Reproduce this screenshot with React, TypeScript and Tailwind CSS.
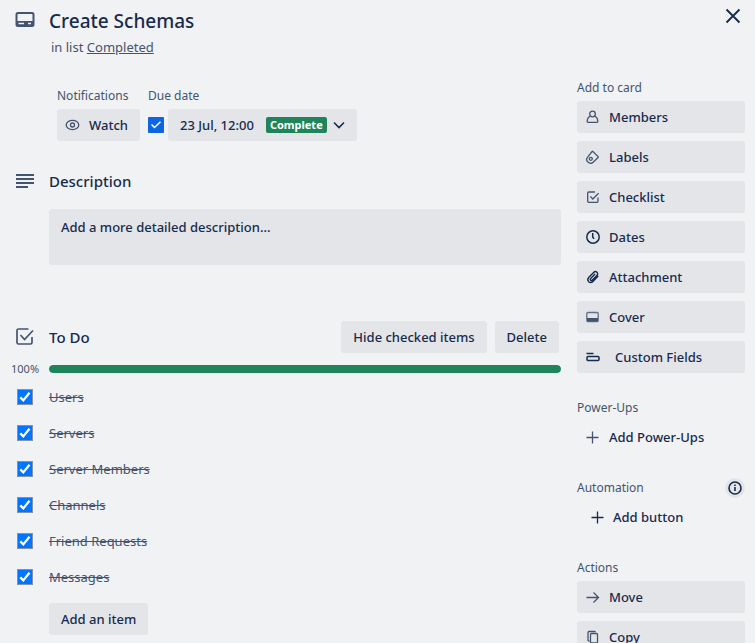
import { useState } from "react";
import type { ReactNode } from "react";

const buttonBase =
  "flex h-8 items-center rounded-[3px] text-[13px] leading-5 font-medium text-[#172b4d]";
const filled = "bg-[#e4e5e9] hover:bg-[#d8dae0]";

function Glyph({ children, size = "small" }: { children: ReactNode; size?: "small" | "large" }) {
  return (
    <svg
      viewBox={size === "small" ? "0 0 16 16" : "0 0 24 24"}
      className={size === "small" ? "size-4 shrink-0" : "size-6 shrink-0"}
      fill="none"
      stroke="#44546f"
      strokeWidth={size === "small" ? 1.3 : 2}
      aria-hidden="true"
    >
      {children}
    </svg>
  );
}

const icons = {
  members: (
    <Glyph>
      <circle cx="7.500" cy="5" r="2.800" />
      <path d="M5.400 7.200C3.300 8 2.200 9.700 2.200 12.600c0 .5.300.8.800.8h9c.5 0 .8-.3.8-.8 0-2.900-1.100-4.600-3.200-5.400" />
    </Glyph>
  ),
  labels: (
    <Glyph>
      <path d="M7.900 2.500 13.100 7.600c.3.300.3.600 0 .9L8.400 13c-1.900 1.700-4 1.500-5.500.1-1.600-1.600-1.600-3.800.1-5.500L7.100 2.500c.3-.3.5-.3.800 0Z" />
      <circle cx="5.800" cy="9.800" r="1.500" />
    </Glyph>
  ),
  checklist: (
    <Glyph>
      <path d="M10 3H3.700c-.6 0-1 .4-1 1v8.300c0 .6.400 1 1 1H12c.6 0 1-.4 1-1V8.500M5.300 7.400 7.800 10l5.800-5.800" />
    </Glyph>
  ),
  dates: (
    <Glyph>
      <g stroke="#172b4d" strokeWidth="1.500">
        <circle cx="8" cy="8" r="6.200" />
        <path d="M7.700 4v4.200l1.500 1.500" />
      </g>
    </Glyph>
  ),
  attachment: (
    <Glyph>
      <path
        stroke="#172b4d"
        strokeWidth="1.400"
        strokeLinecap="round"
        d="m12.900 7.300-4.700 4.900c-1.400 1.500-3.300 1.600-4.500.5-1.200-1.200-1.100-3 .2-4.400l4.700-4.800c1-1 2.500-1.100 3.400-.3.900.9.900 2.300-.1 3.300L7.400 11c-.6.6-1.300.7-1.800.2s-.5-1.200.1-1.800l4.100-4.200"
      />
    </Glyph>
  ),
  cover: (
    <Glyph>
      <rect x="1.800" y="3.500" width="11.400" height="9" rx="1" stroke="#626f86" />
      <path d="M2 9h11v3.500H2z" fill="#44546f" stroke="none" />
    </Glyph>
  ),
  fields: (
    <Glyph>
      <path stroke="#172b4d" strokeWidth="1.500" d="M1.500 4.500h7" />
      <rect stroke="#172b4d" strokeWidth="1.500" x="2" y="7.500" width="12" height="4" rx="1" />
    </Glyph>
  ),
  plus: (
    <Glyph>
      <path d="M7.500 2.500v12M1.500 8.500h12" />
    </Glyph>
  ),
  plusDark: (
    <Glyph>
      <path stroke="#172b4d" d="M8.500 2.500v12M2.500 8.500h12" />
    </Glyph>
  ),
  move: (
    <Glyph>
      <path d="M1.500 8.500h11.500M8.500 3.500l5 5-5 5" />
    </Glyph>
  ),
  copy: (
    <Glyph>
      <path d="M4.500 12H4c-.6 0-1-.4-1-1V3.500c0-.6.400-1 1-1h5.500c.5 0 .8.300.8.800" />
      <rect x="5.500" y="4.500" width="7" height="9.500" rx="1" />
    </Glyph>
  ),
};

function SideButton({
  icon,
  label,
  plain = false,
  wide = false,
}: {
  icon: ReactNode;
  label: string;
  plain?: boolean;
  wide?: boolean;
}) {
  return (
    <button
      type="button"
      className={`${buttonBase} w-full px-2 ${wide ? "gap-[14px]" : "gap-2"} ${plain ? "" : filled}`}
    >
      {icon}
      {label}
    </button>
  );
}

function SideSection({
  title,
  action,
  children,
}: {
  title: string;
  action?: ReactNode;
  children: ReactNode;
}) {
  return (
    <section>
      <div className="mb-[3px] flex h-5 items-center justify-between">
        <h3 className="text-xs leading-5 text-[#44546f]">{title}</h3>
        {action}
      </div>
      <div className="flex flex-col gap-2">{children}</div>
    </section>
  );
}

function TickBox({
  id,
  label,
  checked,
  onChange,
  outlined = false,
}: {
  id: string;
  label?: string;
  checked: boolean;
  onChange: () => void;
  outlined?: boolean;
}) {
  return (
    <span className="grid size-4 shrink-0">
      <input
        id={id}
        type="checkbox"
        aria-label={label}
        checked={checked}
        onChange={onChange}
        className={`col-start-1 row-start-1 size-4 appearance-none ${
          outlined
            ? "border border-[#8590a2] bg-white checked:bg-[#0075ff]"
            : "rounded-[1px] bg-[#dcdfe4] checked:bg-[#0c66e4]"
        }`}
      />
      {checked && (
        <svg
          viewBox="0 0 16 16"
          className="pointer-events-none col-start-1 row-start-1 size-4"
          fill="none"
          stroke="#fff"
          aria-hidden="true"
        >
          {outlined ? (
            <path strokeWidth="2.300" d="m3.300 8.400 3 3L12.500 3.700" />
          ) : (
            <path strokeWidth="1.500" d="m3.500 7.500 3 3 6-5.700" />
          )}
        </svg>
      )}
    </span>
  );
}

const tasks = ["Users", "Servers", "Server Members", "Channels", "Friend Requests", "Messages"];

export default function App() {
  const [done, setDone] = useState(tasks.map(() => true));
  const [dueDone, setDueDone] = useState(true);
  const percent = Math.round((done.filter(Boolean).length / tasks.length) * 100);

  return (
    <div className="min-h-screen bg-[#f1f2f4] pb-4 font-['Noto_Sans',sans-serif] text-[13px] text-[#172b4d]">
      <header className="flex h-[78px] items-start pr-[10px] pl-[13px]">
        <span className="mt-2 w-9 shrink-0">
          <Glyph size="large">
            <rect x="3.500" y="5" width="17" height="13" rx="1.500" />
            <path d="M4 13h16v5H4z" fill="#44546f" stroke="none" />
            <path stroke="#f1f2f4" strokeWidth="1.500" d="M5.500 15.500H11M15 15.500h3" />
          </Glyph>
        </span>
        <div className="flex-1 pt-[9px]">
          <h1 className="text-[19px] leading-6 font-medium">Create Schemas</h1>
          <p className="mt-1 pl-[2px] leading-5 text-[#44546f]">
            in list{" "}
            <a href="#completed" className="underline">
              Completed
            </a>
          </p>
        </div>
        <button type="button" aria-label="Close" className="mt-1 p-1">
          <svg viewBox="0 0 16 16" className="size-4" stroke="#172b4d" strokeWidth="1.900" aria-hidden="true">
            <path d="m1.500 1.500 13 13M14.500 1.500l-13 13" />
          </svg>
        </button>
      </header>

      <div className="flex gap-4 pr-[10px] pl-[13px]">
        <main className="min-w-0 flex-1 pt-2">
          <div className="flex gap-2 pl-11">
            <div>
              <h3 className="mb-[3px] text-xs leading-5 text-[#44546f]">Notifications</h3>
              <button type="button" className={`${buttonBase} ${filled} w-[83px] gap-2 pl-2`}>
                <Glyph>
                  <ellipse cx="7.500" cy="8" rx="6.300" ry="4.600" />
                  <circle cx="7.500" cy="8" r="2" />
                </Glyph>
                Watch
              </button>
            </div>
            <div>
              <h3 className="mb-[3px] text-xs leading-5 text-[#44546f]">Due date</h3>
              <div className="flex items-center gap-1">
                <TickBox
                  id="due"
                  label="Due date complete"
                  checked={dueDone}
                  onChange={() => setDueDone(!dueDone)}
                />
                <button type="button" className={`${buttonBase} ${filled} w-[189px] pl-3`}>
                  23 Jul, 12:00
                  <span className="ml-3 rounded-xs bg-[#1f845a] px-1 text-[11px] leading-4 font-bold text-white">
                    Complete
                  </span>
                  <svg
                    viewBox="0 0 16 16"
                    className="ml-1 size-4"
                    fill="none"
                    stroke="#172b4d"
                    strokeWidth="1.600"
                    aria-hidden="true"
                  >
                    <path d="m3 5.500 5 5 5-5" />
                  </svg>
                </button>
              </div>
            </div>
          </div>

          <section className="mt-6">
            <div className="flex h-8 items-center">
              <span className="w-9 shrink-0">
                <Glyph size="large">
                  <path d="M3 6h18M3 10h18M3 14h18M3 18h12" />
                </Glyph>
              </span>
              <h2 className="text-[15px] leading-5 font-medium">Description</h2>
            </div>
            <button
              type="button"
              className={`mt-3 ml-9 flex h-14 w-[calc(100%-36px)] rounded-[3px] px-3 py-2 text-left leading-5 font-medium ${filled}`}
            >
              Add a more detailed description...
            </button>
          </section>

          <section className="mt-14">
            <div className="flex h-8 items-center">
              <span className="w-9 shrink-0">
                <Glyph size="large">
                  <path
                    strokeWidth="1.700"
                    d="M15.500 4H5.500c-.9 0-1.500.6-1.500 1.500v12c0 .9.600 1.500 1.500 1.500h12c.9 0 1.500-.6 1.500-1.500v-5.500M7.500 10l4 4.500 8.500-9"
                  />
                </Glyph>
              </span>
              <h2 className="flex-1 text-[15px] leading-5 font-medium">To Do</h2>
              <div className="flex gap-2 pr-[2px]">
                <button type="button" className={`${buttonBase} ${filled} px-3`}>
                  Hide checked items
                </button>
                <button type="button" className={`${buttonBase} ${filled} px-3`}>
                  Delete
                </button>
              </div>
            </div>
            <div className="mt-2 flex h-4 items-center">
              <span className="-ml-1 w-10 pl-[2px] text-[11px] leading-4 text-[#44546f]">{percent}%</span>
              <div className="h-2 flex-1 overflow-hidden rounded-full bg-[#dcdfe4]">
                <div className="h-full rounded-full bg-[#1f845a]" style={{ width: `${percent}%` }} />
              </div>
            </div>
            <ul className="mt-[2px]">
              {tasks.map((task, i) => (
                <li key={task} className="flex h-9 items-center gap-4 pl-1">
                  <TickBox
                    id={`task-${i}`}
                    checked={done[i]}
                    onChange={() => setDone(done.map((d, j) => (j === i ? !d : d)))}
                    outlined
                  />
                  <label
                    htmlFor={`task-${i}`}
                    className={done[i] ? "leading-5 text-[#44546f] line-through" : "leading-5"}
                  >
                    {task}
                  </label>
                </li>
              ))}
            </ul>
            <button type="button" className={`${buttonBase} ${filled} mt-2 ml-9 px-3`}>
              Add an item
            </button>
          </section>
        </main>

        <aside className="flex w-[168px] shrink-0 flex-col gap-[25px]">
          <SideSection title="Add to card">
            <SideButton icon={icons.members} label="Members" />
            <SideButton icon={icons.labels} label="Labels" />
            <SideButton icon={icons.checklist} label="Checklist" />
            <SideButton icon={icons.dates} label="Dates" />
            <SideButton icon={icons.attachment} label="Attachment" />
            <SideButton icon={icons.cover} label="Cover" />
            <SideButton icon={icons.fields} label="Custom Fields" wide />
          </SideSection>
          <SideSection title="Power-Ups">
            <SideButton icon={icons.plus} label="Add Power-Ups" plain />
          </SideSection>
          <SideSection
            title="Automation"
            action={
              <button
                type="button"
                aria-label="About automation"
                className="flex size-5 items-center justify-center rounded-full bg-[#e4e5e9]"
              >
                <svg viewBox="0 0 16 16" className="size-4" fill="none" stroke="#172b4d" strokeWidth="1.600" aria-hidden="true">
                  <circle cx="8" cy="8" r="6" />
                  <path d="M8 7v4M8 4.600v1.500" />
                </svg>
              </button>
            }
          >
            <div className="pl-1">
              <SideButton icon={icons.plusDark} label="Add button" plain />
            </div>
          </SideSection>
          <SideSection title="Actions">
            <SideButton icon={icons.move} label="Move" />
            <SideButton icon={icons.copy} label="Copy" />
          </SideSection>
        </aside>
      </div>
    </div>
  );
}
